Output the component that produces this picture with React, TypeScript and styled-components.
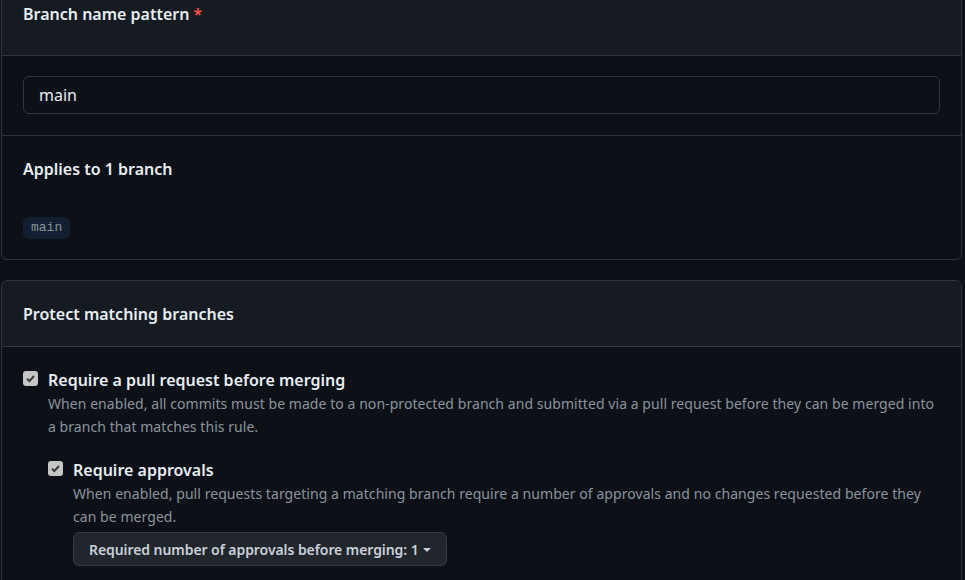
import React from "react";
import styled, { createGlobalStyle } from "styled-components";

const GlobalStyle = createGlobalStyle`
  html, body {
    margin: 0;
    padding: 0;
    background: #0d1117;
  }
  body {
    font-family: "Noto Sans", "Liberation Sans", sans-serif;
    color: #e6edf3;
    overflow: hidden;
  }
`;

// whole settings column, scrolled a little so the first header is cut off
const Page = styled.div`
  margin-top: -20px;
  display: flex;
  flex-direction: column;
  gap: 20px;
`;

const Box = styled.section`
  margin-left: 1px;
  width: 961px;
  box-sizing: border-box;
  border: 1px solid #30363d;
  border-radius: 6px;
  background: #0d1117;
  overflow: hidden;
`;

const BoxHeader = styled.div<{ $bottom?: number }>`
  background: #161b22;
  border-bottom: 1px solid #30363d;
  padding: 21px 21px ${({ $bottom }) => $bottom ?? 20}px;
`;

const Title = styled.h3`
  margin: 0;
  font-size: 16px;
  line-height: 24px;
  font-weight: 600;
  color: #e6edf3;
`;

const Required = styled.span`
  color: #f85149;
  margin-left: 4px;
`;

const Row = styled.div<{ $top?: number; $bottom?: number; $divider?: boolean }>`
  padding: ${({ $top }) => $top ?? 21}px 21px ${({ $bottom }) => $bottom ?? 21}px;
  border-top: ${({ $divider }) => ($divider ? "1px solid #30363d" : "none")};
`;

const TextInput = styled.input`
  display: block;
  width: 100%;
  height: 38px;
  box-sizing: border-box;
  background: #0d1117;
  border: 1px solid #30363d;
  border-radius: 6px;
  padding: 0 15px;
  font-family: inherit;
  font-size: 16px;
  color: #e6edf3;
  outline: none;
`;

const BranchChip = styled.code`
  display: inline-block;
  margin-top: 36px;
  height: 22px;
  line-height: 22px;
  padding: 0 8px;
  border-radius: 6px;
  background: #121f31;
  color: #8b949e;
  font-family: "Liberation Mono", "DejaVu Sans Mono", monospace;
  font-size: 13px;
`;

const Option = styled.div`
  display: flex;
  gap: 10px;
  align-items: flex-start;
`;

const CheckMark = styled.span`
  flex: none;
  width: 15px;
  height: 15px;
  margin-top: 3px;
  border-radius: 3px;
  background: #c6c6c6;
  display: flex;
  align-items: center;
  justify-content: center;
`;

const OptionBody = styled.div`
  display: flex;
  flex-direction: column;
`;

const OptionLabel = styled.label`
  font-size: 16px;
  line-height: 24px;
  font-weight: 600;
  color: #e6edf3;
`;

const Note = styled.p`
  margin: 0;
  font-size: 14px;
  line-height: 23px;
  letter-spacing: 0.06px;
  color: #8b949e;
`;

const SubOptions = styled.div`
  margin-top: 20px;
`;

const SelectButton = styled.button`
  margin-top: 4px;
  align-self: flex-start;
  height: 34px;
  display: inline-flex;
  align-items: center;
  padding: 0 11px 0 15px;
  background: #21262d;
  border: 1px solid #363b42;
  border-radius: 6px;
  color: #c9d1d9;
  font-family: inherit;
  font-size: 14px;
  font-weight: 600;
  letter-spacing: -0.07px;
  cursor: pointer;
`;

const Check = () => (
  <CheckMark>
    <svg width="11" height="11" viewBox="0 0 12 12">
      <path d="M2.2 6.3 4.8 8.8 9.8 3.3" fill="none" stroke="#3a3a3a" strokeWidth="2.2" />
    </svg>
  </CheckMark>
);

const Caret = () => (
  <svg width="16" height="16" viewBox="0 0 16 16" fill="currentColor">
    <path d="m4.427 7.427 3.396 3.396a.25.25 0 0 0 .354 0l3.396-3.396A.25.25 0 0 0 11.396 7H4.604a.25.25 0 0 0-.177.427Z" />
  </svg>
);

export default function App() {
  return (
    <>
      <GlobalStyle />
      <Page>
        <Box>
          <BoxHeader $bottom={29}>
            <Title>
              Branch name pattern<Required>*</Required>
            </Title>
          </BoxHeader>
          <Row $top={20} $bottom={21}>
            <TextInput defaultValue="main" />
          </Row>
          <Row $divider $top={21} $bottom={20}>
            <Title>Applies to 1 branch</Title>
            <BranchChip>main</BranchChip>
          </Row>
        </Box>

        <Box>
          <BoxHeader>
            <Title>Protect matching branches</Title>
          </BoxHeader>
          <Row $top={21} $bottom={30}>
            <Option>
              <Check />
              <OptionBody>
                <OptionLabel>Require a pull request before merging</OptionLabel>
                <Note>
                  When enabled, all commits must be made to a non-protected branch and submitted via a pull request
                  before they can be merged into a branch that matches this rule.
                </Note>
                <SubOptions>
                  <Option>
                    <Check />
                    <OptionBody>
                      <OptionLabel>Require approvals</OptionLabel>
                      <Note>
                        When enabled, pull requests targeting a matching branch require a number of approvals and no
                        changes requested before they can be merged.
                      </Note>
                      <SelectButton>
                        Required number of approvals before merging: 1
                        <Caret />
                      </SelectButton>
                    </OptionBody>
                  </Option>
                </SubOptions>
              </OptionBody>
            </Option>
          </Row>
        </Box>
      </Page>
    </>
  );
}
